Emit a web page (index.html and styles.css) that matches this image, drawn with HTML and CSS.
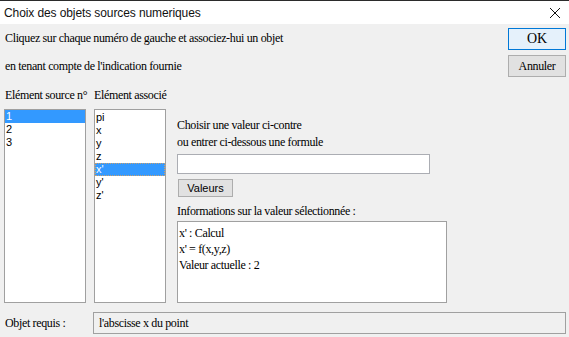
FILE: index.html
```html
<!DOCTYPE html>
<html lang="fr">
<head>
<meta charset="utf-8">
<title>Choix des objets sources numeriques</title>
<link rel="stylesheet" href="styles.css">
</head>
<body>
<div class="window">
  <div class="titlebar">
    <span class="title">Choix des objets sources numeriques</span>
    <svg class="close" width="12" height="12" viewBox="0 0 12 12"><path d="M1 1L11 11M11 1L1 11" stroke="#111" stroke-width="1" fill="none"/></svg>
  </div>
  <div class="content">
    <div class="top">
      <div class="intro">
        <div>Cliquez sur chaque numéro de gauche et associez-hui un objet</div>
        <div>en tenant compte de l'indication fournie</div>
      </div>
      <div class="buttons">
        <button class="btn btn-default">OK</button>
        <button class="btn">Annuler</button>
      </div>
    </div>
    <div class="main">
      <div class="col col-source">
        <div class="heading">Elément source n°</div>
        <ul class="list">
          <li class="sel">1</li>
          <li>2</li>
          <li>3</li>
        </ul>
      </div>
      <div class="col col-assoc">
        <div class="heading">Elément associé</div>
        <ul class="list list-assoc">
          <li>pi</li>
          <li>x</li>
          <li>y</li>
          <li>z</li>
          <li class="sel focus">x'</li>
          <li>y'</li>
          <li>z'</li>
        </ul>
      </div>
      <div class="col col-panel">
        <div class="line first">Choisir une valeur ci-contre</div>
        <div class="line">ou entrer ci-dessous une formule</div>
        <div class="input"></div>
        <button class="btn-sans">Valeurs</button>
        <div class="line info-label">Informations sur la valeur sélectionnée :</div>
        <div class="info">
          <div>x' : Calcul</div>
          <div>x' = f(x,y,z)</div>
          <div>Valeur actuelle : 2</div>
        </div>
      </div>
    </div>
    <div class="footer">
      <div class="footer-label">Objet requis :</div>
      <div class="field">l'abscisse x du point</div>
    </div>
  </div>
</div>
</body>
</html>
```

FILE: styles.css
```css
html, body {
  margin: 0;
  padding: 0;
  background: #f0f0f0;
}
.window {
  width: 569px;
  height: 337px;
  display: flex;
  flex-direction: column;
  background: #f0f0f0;
  font-family: "Liberation Serif", "Times New Roman", serif;
  font-size: 12px;
  letter-spacing: -0.35px;
  color: #000;
}
.titlebar {
  height: 23px;
  border-top: 1px solid #2b2b2b;
  background: #fff;
  display: flex;
  align-items: center;
  justify-content: space-between;
  padding: 0 8px 0 4px;
}
.title {
  font-family: "Liberation Sans", Arial, sans-serif;
  font-size: 12px;
  letter-spacing: -0.1px;
  color: #111;
}
.close {
  margin-top: 1px;
}
.content {
  flex: 1;
  padding: 0 3px 0 4px;
  display: flex;
  flex-direction: column;
}
.top {
  display: flex;
  justify-content: space-between;
  height: 56px;
}
.intro {
  padding-left: 1px;
  line-height: 28px;
}
.buttons {
  margin-top: 4px;
  display: flex;
  flex-direction: column;
  gap: 5px;
}
.btn {
  width: 58px;
  height: 22px;
  padding: 0;
  border: 1px solid #adadad;
  background: #e1e1e1;
  font-family: "Liberation Serif", "Times New Roman", serif;
  font-size: 12px;
  letter-spacing: -0.35px;
  color: #000;
}
.btn-default {
  border-color: #0078d7;
  background: #e5f1fb;
  font-size: 14px;
  letter-spacing: 0;
}
.main {
  display: flex;
  margin-top: 8px;
}
.col {
  display: flex;
  flex-direction: column;
}
.col-source {
  width: 82px;
}
.col-assoc {
  width: 72px;
  margin-left: 8px;
}
.col-panel {
  margin-left: 11px;
}
.heading {
  line-height: 14px;
  white-space: nowrap;
  padding-left: 1px;
  margin-bottom: 7px;
}
.col-assoc .heading {
  padding-left: 0;
}
.list {
  list-style: none;
  margin: 0;
  padding: 0;
  height: 194px;
  box-sizing: border-box;
  border: 1px solid #a0a0a0;
  background: #fff;
  font-family: "Liberation Sans", Arial, sans-serif;
  font-size: 11px;
  letter-spacing: 0;
}
.list li {
  height: 13px;
  line-height: 13px;
  padding-left: 1px;
}
.list-assoc {
  padding-top: 1px;
}
.list li.sel {
  background: #3399ff;
  color: #fff;
}
.list li.focus {
  outline: 1px dotted #c8a070;
  outline-offset: -1px;
}
.line {
  line-height: 14px;
  white-space: nowrap;
}
.line.first {
  margin-top: 30px;
  margin-bottom: 3px;
}
.input {
  margin-top: 5px;
  width: 253px;
  height: 20px;
  box-sizing: border-box;
  border: 1px solid #abadb3;
  background: #fff;
}
.btn-sans {
  margin: 5px 0 0 1px;
  width: 55px;
  height: 18px;
  padding: 0;
  border: 1px solid #adadad;
  background: #e1e1e1;
  font-family: "Liberation Sans", Arial, sans-serif;
  font-size: 11px;
  letter-spacing: 0;
  color: #000;
  text-align: center;
}
.info-label {
  margin-top: 7px;
}
.info {
  margin-top: 3px;
  width: 270px;
  height: 82px;
  box-sizing: border-box;
  border: 1px solid #a0a0a0;
  background: #fff;
  padding: 3px 0 0 1px;
  line-height: 16px;
}
.footer {
  display: flex;
  align-items: center;
  margin-top: 9px;
}
.footer-label {
  width: 88px;
  padding-left: 1px;
}
.field {
  flex: 1;
  height: 22px;
  box-sizing: border-box;
  border: 1px solid #a0a0a0;
  background: #f0f0f0;
  line-height: 20px;
  padding-left: 5px;
}
```
